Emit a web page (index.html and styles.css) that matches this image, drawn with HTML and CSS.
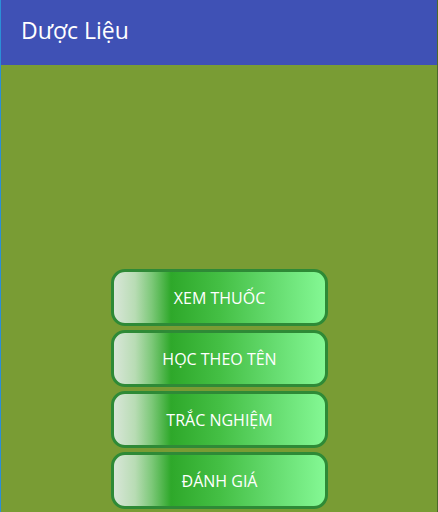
FILE: index.html
```html
<!DOCTYPE html>
<html lang="vi">
<head>
<meta charset="utf-8">
<title>Dược Liệu</title>
<link rel="stylesheet" href="styles.css">
</head>
<body>
<div class="app">
  <header class="appbar"><h1 class="title">Dược Liệu</h1></header>
  <main class="content">
    <div class="menu">
      <button class="btn">XEM THUỐC</button>
      <button class="btn">HỌC THEO TÊN</button>
      <button class="btn">TRẮC NGHIỆM</button>
      <button class="btn">ĐÁNH GIÁ</button>
    </div>
  </main>
</div>
</body>
</html>
```
FILE: styles.css
```css
html, body {
  margin: 0;
  padding: 0;
  height: 100%;
  overflow: hidden;
}
body {
  font-family: "Open Sans", "Noto Sans", sans-serif;
  background: #799c34;
}
.app {
  height: 512px;
  border-left: 1px solid #2b8fd6;
  border-right: 1px solid #4a6a2a;
  display: flex;
  flex-direction: column;
}
.appbar {
  height: 65px;
  background: #3f51b5;
  display: flex;
  align-items: center;
  padding-left: 20px;
  flex-shrink: 0;
}
.title {
  margin: 0;
  color: #ffffff;
  font-size: 23px;
  font-weight: 400;
  line-height: 1;
  position: relative;
  top: -2px;
}
.content {
  flex: 1;
  background: #799c34;
  padding-top: 204px;
}
.menu {
  display: flex;
  flex-direction: column;
  align-items: center;
  gap: 4px;
}
.btn {
  box-sizing: border-box;
  width: 217px;
  height: 57px;
  border: 3px solid #2e8a36;
  border-radius: 14px;
  background: linear-gradient(90deg, #d8e6d8 0%, #b8dcb4 10%, #7cc878 18%, #2ea82a 27%, #44bf44 50%, #66dc70 76%, #84f894 100%);
  color: #ffffff;
  font-family: "Open Sans", "Noto Sans", sans-serif;
  font-size: 16px;
  font-weight: 400;
  padding: 0;
  margin-left: 1px;
}
```
